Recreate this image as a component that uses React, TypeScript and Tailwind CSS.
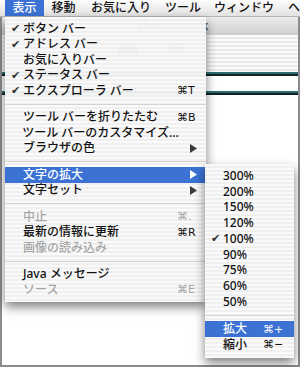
import type { FC } from "react";

type Entry =
  | "sep"
  | { label: string; check?: boolean; keys?: string; arrow?: boolean; disabled?: boolean; active?: boolean };

const mainMenu: Entry[] = [
  { label: "ボタン バー", check: true },
  { label: "アドレス バー", check: true },
  { label: "お気に入りバー" },
  { label: "ステータス バー", check: true },
  { label: "エクスプローラ バー", check: true, keys: "⌘T" },
  "sep",
  { label: "ツール バーを折りたたむ", keys: "⌘B" },
  { label: "ツール バーのカスタマイズ..." },
  { label: "ブラウザの色", arrow: true },
  "sep",
  { label: "文字の拡大", arrow: true, active: true },
  { label: "文字セット", arrow: true },
  "sep",
  { label: "中止", keys: "⌘.", disabled: true },
  { label: "最新の情報に更新", keys: "⌘R" },
  { label: "画像の読み込み", disabled: true },
  "sep",
  { label: "Java メッセージ" },
  { label: "ソース", keys: "⌘E", disabled: true },
];

const sizeMenu: Entry[] = [
  { label: "300%" },
  { label: "200%" },
  { label: "150%" },
  { label: "120%" },
  { label: "100%", check: true },
  { label: "90%" },
  { label: "75%" },
  { label: "60%" },
  { label: "50%" },
  "sep",
  { label: "拡大", keys: "⌘+", active: true },
  { label: "縮小", keys: "⌘−" },
];

const font = "font-['Noto_Sans','Noto_Sans_CJK_JP',sans-serif]";
const stripes =
  "bg-[repeating-linear-gradient(180deg,rgba(250,250,250,0.97)_0px,rgba(250,250,250,0.97)_2px,rgba(239,239,239,0.97)_2px,rgba(239,239,239,0.97)_4px)]";

const Arrow: FC<{ white?: boolean }> = ({ white }) => (
  <svg width="7" height="9" viewBox="0 0 7 9">
    <polygon points="0,0 7,4.5 0,9" fill={white ? "#ffffff" : "#3a3a3a"} />
  </svg>
);

const MenuList: FC<{ items: Entry[]; rowH: string; sepH: string; keyW: string }> = ({ items, rowH, sepH, keyW }) => (
  <>
    {items.map((it, i) => {
      if (it === "sep") {
        return (
          <div key={i} className={`${sepH} flex items-center`}>
            <div className="h-px w-full bg-[#d4d4d4]" />
          </div>
        );
      }
      const color = it.active ? "text-white" : it.disabled ? "text-[#a6a6a6]" : "text-[#111]";
      return (
        <div key={i} className={`${rowH} flex items-center ${it.active ? "bg-[#3b72d4]" : ""} ${color}`}>
          <span className="w-[18px] pl-[6px] text-[11px] font-['DejaVu_Sans'] leading-none text-[#333]">{it.check ? "✔" : ""}</span>
          <span className="flex-1 whitespace-nowrap font-medium">{it.label}</span>
          <span className={`${keyW} flex items-center text-[11px] font-['DejaVu_Sans'] whitespace-nowrap`}>
            {it.keys}
            {it.arrow && (
              <span className="pl-[13px] flex items-center">
                <Arrow white={it.active} />
              </span>
            )}
          </span>
        </div>
      );
    })}
  </>
);

const App: FC = () => {
  return (
    <div className={`relative w-[300px] h-[367px] overflow-hidden bg-white text-[12px] leading-none ${font}`}>
      {/* menu bar */}
      <div className="h-[17px] flex items-stretch bg-gradient-to-b from-[#fdfdfd] to-[#e2e2e2] border-b border-[#b4b4b4] text-[#111] font-medium pl-[5px]">
        <span className="w-[39px] flex items-center justify-center bg-[#3b72d4] text-white">表示</span>
        <span className="w-[39px] flex items-center justify-center">移動</span>
        <span className="w-[76px] flex items-center justify-center">お気に入り</span>
        <span className="w-[48px] flex items-center justify-center">ツール</span>
        <span className="w-[74px] flex items-center justify-center">ウィンドウ</span>
        <span className="pl-[7px] flex items-center">ヘ</span>
      </div>

      {/* browser window behind the menus */}
      <div className="h-[350px] flex flex-col border-x-2 border-b-2 border-[#8c8c8c]">
        <div className="h-[18px] bg-gradient-to-b from-[#ececec] to-[#cfcfcf] flex items-center pl-[121px] gap-[3px] text-[#555] font-bold">
          <span className="w-[10px] h-[10px] rounded-full border border-[#555]" />
          <span className="font-['Noto_Sans']">about:blank</span>
        </div>
        <div className="h-[37px] bg-[repeating-linear-gradient(180deg,#fbfbfb_0px,#fbfbfb_2px,#e9e9e9_2px,#e9e9e9_4px)] flex pl-[108px] gap-[16px] pt-[5px] text-[9px] text-[#4a6a86]">
          <div className="flex flex-col items-center gap-[3px] w-[36px]">
            <svg width="24" height="16" viewBox="0 0 24 16">
              <rect x="5" y="1" width="14" height="6" fill="#6f8ca4" />
              <rect x="1" y="6" width="22" height="9" rx="2" fill="#3f5f7a" />
            </svg>
            <span>プリント</span>
          </div>
          <div className="flex flex-col items-center gap-[3px] w-[30px]">
            <svg width="18" height="16" viewBox="0 0 18 16">
              <rect x="1" y="3" width="16" height="11" fill="#5f7c94" />
              <polyline points="1,3 9,10 17,3" fill="none" stroke="#2e4a62" strokeWidth="1.2" />
            </svg>
            <span>メール</span>
          </div>
        </div>
        <div className="h-[2px] bg-[#2c6b70]" />
        <div className="h-[2px] bg-[#0f2426]" />
        <div className="h-[15px] bg-white" />
        <div className="h-[2px] bg-[#2c6b70]" />
        <div className="h-[2px] bg-[#0f2426]" />
        <div className="flex-1 bg-white" />
      </div>

      {/* main 表示 menu */}
      <div className={`absolute left-[5px] top-[17px] w-[201px] pt-[4px] pb-[4px] ${stripes} shadow-[0_5px_10px_rgba(0,0,0,0.5)]`}>
        <MenuList items={mainMenu} rowH="h-[15.5px]" sepH="h-[11px]" keyW="w-[29px]" />
      </div>

      {/* 文字の拡大 submenu */}
      <div className={`absolute left-[205px] top-[164px] w-[89px] pt-[4px] pb-[5px] ${stripes} shadow-[0_5px_10px_rgba(0,0,0,0.5)]`}>
        <MenuList items={sizeMenu} rowH="h-[15.75px]" sepH="h-[11.5px]" keyW="w-[31px]" />
      </div>
    </div>
  );
};

export default App;
